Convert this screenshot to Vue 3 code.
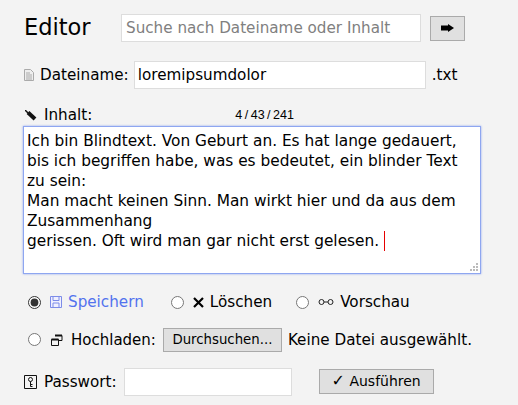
<script setup>
import { ref } from "vue";

const action = ref("save");
const search = ref("");
const filename = ref("loremipsumdolor");
const password = ref("");

const lines = [
  "Ich bin Blindtext. Von Geburt an. Es hat lange gedauert,",
  "bis ich begriffen habe, was es bedeutet, ein blinder Text",
  "zu sein:",
  "Man macht keinen Sinn. Man wirkt hier und da aus dem",
  "Zusammenhang",
  "gerissen. Oft wird man gar nicht erst gelesen."
];
</script>

<template>
  <div class="page">
    <header class="top">
      <h1>Editor</h1>
      <input v-model="search" class="field search" placeholder="Suche nach Dateiname oder Inhalt" />
      <button class="btn go">
        <svg width="13" height="8" viewBox="0 0 13 8"><path d="M0 1.500h7V0l6 4-6 4V6.500H0z" fill="#000" /></svg>
      </button>
    </header>

    <div class="name-row">
      <svg class="ic doc" width="10" height="12" viewBox="0 0 10 12">
        <path d="M.5.500h6l3 3v8h-9z" fill="#eee" stroke="#aaa" />
        <path d="M2 4h4M2 6h6M2 8h6M2 10h6" stroke="#aaa" />
      </svg>
      <label>Dateiname:</label>
      <input v-model="filename" class="field name" />
      <span class="ext">.txt</span>
    </div>

    <div class="content-head">
      <svg class="ic pencil" width="12" height="11" viewBox="0 0 12 11">
        <path d="M0 0l3 3" stroke="#111" stroke-width="1.500" />
        <path d="M3 2.500l7 6.500" stroke="#111" stroke-width="4" />
      </svg>
      <label>Inhalt:</label>
      <span class="counter">4 / 43 / 241</span>
    </div>

    <div class="editor">
      <div v-for="(line, i) in lines" :key="i" class="line">
        {{ line }}<span v-if="i === lines.length - 1" class="caret"></span>
      </div>
      <svg class="grip" width="8" height="8" viewBox="0 0 8 8">
        <path d="M6 0h2v2H6zM3 3h2v2H3zM6 3h2v2H6zM0 6h2v2H0zM3 6h2v2H3zM6 6h2v2H6z" fill="#bbb" />
      </svg>
    </div>

    <div class="actions">
      <label class="opt">
        <input v-model="action" type="radio" value="save" />
        <svg class="ic" width="12" height="12" viewBox="0 0 12 12">
          <path d="M.5.500h11v11H.5z" fill="#f0f0ff" stroke="#7d8ce8" />
          <path d="M3 1v3.500h6V1M3 11V7h6v4" fill="none" stroke="#7d8ce8" />
        </svg>
        <span class="save">Speichern</span>
      </label>
      <label class="opt">
        <input v-model="action" type="radio" value="delete" />
        <svg class="ic" width="11" height="11" viewBox="0 0 11 11"><path d="M1 1l9 9M10 1l-9 9" stroke="#000" stroke-width="2.200" /></svg>
        <span>Löschen</span>
      </label>
      <label class="opt">
        <input v-model="action" type="radio" value="preview" />
        <svg class="ic" width="16" height="8" viewBox="0 0 16 8">
          <circle cx="3.500" cy="4" r="2.500" fill="none" stroke="#222" />
          <circle cx="12.500" cy="4" r="2.500" fill="none" stroke="#222" />
          <path d="M6 4h4" stroke="#222" />
        </svg>
        <span>Vorschau</span>
      </label>
    </div>

    <div class="upload">
      <label class="opt">
        <input v-model="action" type="radio" value="upload" />
        <svg class="ic up" width="12" height="12" viewBox="0 0 12 12">
          <path d="M4 1.500h7v5H8" fill="none" stroke="#111" />
          <path d="M4 1.500h7" stroke="#111" stroke-width="2" />
          <path d="M.5 5.500h7v6h-7z" fill="#f3f3f3" stroke="#111" />
          <path d="M.5 5.500h7" stroke="#111" stroke-width="2" />
        </svg>
        <span class="up-label">Hochladen:</span>
      </label>
      <button class="btn browse">Durchsuchen...</button>
      <span>Keine Datei ausgewählt.</span>
    </div>

    <div class="pass-row">
      <svg class="ic doc" width="13" height="14" viewBox="0 0 13 14">
        <path d="M.5.500h12v13H.5z" fill="none" stroke="#111" />
        <circle cx="6.500" cy="4.500" r="2" fill="none" stroke="#111" />
        <path d="M6.500 6.500V11.500M6.500 9.500h2M6.500 11.500h2" stroke="#111" />
      </svg>
      <label>Passwort:</label>
      <input v-model="password" type="password" class="field pass" />
      <button class="btn run"><span class="check">✓</span> Ausführen</button>
    </div>
  </div>
</template>

<style>
html,
body {
  background: #f3f3f3;
}
</style>

<style scoped>
.page {
  width: 518px;
  height: 405px;
  padding: 14px 0 0 23px;
  box-sizing: border-box;
  overflow: hidden;
  background: #f3f3f3;
  color: #000;
  font-family: "DejaVu Sans", Verdana, sans-serif;
  font-size: 15.2px;
}

.top {
  display: flex;
  align-items: center;
  height: 28px;
}

h1 {
  margin: -3px 0 0 1px;
  width: 97px;
  font-size: 22.5px;
  font-weight: 400;
}

.field {
  box-sizing: border-box;
  height: 28px;
  padding: 0 4px;
  border: 1px solid #ddd;
  border-radius: 0;
  outline: none;
  background: #fff;
  color: #000;
  font: inherit;
}

.field::placeholder {
  color: #808080;
}

.search {
  width: 300px;
}

.btn {
  box-sizing: border-box;
  padding: 0;
  border: 1px solid #aaa;
  background: #e0e0e0;
  color: #000;
  font: inherit;
  font-size: 14px;
}

.go {
  display: flex;
  align-items: center;
  justify-content: center;
  width: 35px;
  height: 25px;
  margin-left: 9px;
}

.ic {
  flex: none;
}

.doc {
  margin-left: 1px;
}

.pencil {
  margin-left: 2px;
}

.up {
  margin-left: 1px;
  margin-right: 2px;
}

.up-label {
  font-size: 15px;
}

.name-row {
  display: flex;
  align-items: center;
  height: 28px;
  margin-top: 19px;
}

.name-row label {
  margin-left: 6px;
}

.name {
  width: 292px;
  margin-left: 5px;
  padding: 0 3px;
}

.ext {
  margin-left: 6px;
}

.content-head {
  display: flex;
  align-items: center;
  height: 20px;
  margin-top: 16px;
}

.content-head label {
  margin-left: 7px;
}

.counter {
  margin-left: 143px;
  font-family: "Liberation Sans", Arial, sans-serif;
  font-size: 12.5px;
  word-spacing: -1px;
}

.editor {
  position: relative;
  box-sizing: border-box;
  width: 458px;
  height: 148px;
  margin-top: 1px;
  padding: 4px 3px;
  border: 1px solid #8ea6f0;
  box-shadow: 0 0 2px #8ea6f0;
  background: #fff;
  font-size: 15.35px;
  line-height: 20px;
}

.line {
  white-space: nowrap;
}

.caret {
  display: inline-block;
  width: 0;
  height: 20px;
  margin-left: 5px;
  vertical-align: -5px;
  border-left: 1px solid #e60000;
}

.grip {
  position: absolute;
  right: 2px;
  bottom: 2px;
}

.actions {
  display: flex;
  align-items: center;
  gap: 27px;
  height: 20px;
  margin-top: 18px;
  margin-left: 5px;
}

.actions .opt:nth-child(2) {
  margin-right: -3px;
}

.opt {
  display: flex;
  align-items: center;
  gap: 6px;
}

.opt input {
  width: 13px;
  height: 13px;
  margin: 0 3px 0 0;
  accent-color: #333;
}

.save {
  color: #5272ee;
}

.upload {
  display: flex;
  align-items: center;
  height: 25px;
  margin-top: 15px;
  margin-left: 5px;
}

.browse {
  width: 119px;
  height: 24px;
  margin: 0 6px 0 7px;
  font-size: 13.300px;
}

.pass-row {
  display: flex;
  align-items: center;
  height: 28px;
  margin-top: 16px;
}

.pass-row label {
  margin-left: 7px;
}

.pass {
  width: 168px;
  margin-left: 7px;
}

.run {
  width: 115px;
  height: 25px;
  margin-left: 27px;
  margin-top: -2px;
}

.check {
  font-size: 16px;
  line-height: 1;
}
</style>
